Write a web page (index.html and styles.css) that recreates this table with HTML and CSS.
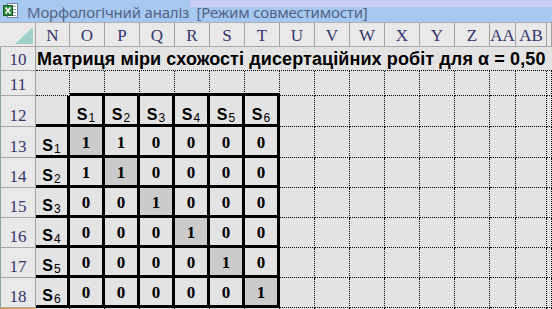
FILE: index.html
```html
<!DOCTYPE html>
<html>
<head>
<meta charset="utf-8">
<link rel="stylesheet" href="styles.css">
</head>
<body>
<div class="window">
  <div class="titlebar">
    <span class="lav"></span>
    <svg class="xlicon" width="15" height="15" viewBox="0 0 15 15">
      <rect x="4.5" y="0.5" width="10" height="14" fill="#fff" stroke="#6f82a6"/>
      <line x1="9" y1="3.5" x2="13" y2="3.5" stroke="#8aa0c0"/>
      <line x1="9" y1="6.5" x2="13" y2="6.5" stroke="#8aa0c0"/>
      <line x1="9" y1="9.5" x2="13" y2="9.5" stroke="#8aa0c0"/>
      <line x1="9" y1="12.5" x2="13" y2="12.5" stroke="#8aa0c0"/>
      <rect x="0.5" y="2.5" width="9" height="10" fill="#2a8a3e" stroke="#1b5e2a"/>
      <path d="M2.5 4.5 L7.5 10.5 M7.5 4.5 L2.5 10.5" stroke="#fff" stroke-width="1.6"/>
    </svg>
    <span class="title">Морфологічний аналіз&nbsp; [Режим совместимости]</span>
  </div>
  <div class="sheet">
    <!-- column headers -->
    <div class="hd corner"><svg width="35" height="24" viewBox="0 0 35 24"><polygon points="15,21 33,21 33,4" fill="#9fd1cd"/></svg></div>
    <div class="hd">N</div><div class="hd">O</div><div class="hd">P</div><div class="hd">Q</div><div class="hd">R</div><div class="hd">S</div><div class="hd">T</div>
    <div class="hd">U</div><div class="hd">V</div><div class="hd">W</div><div class="hd">X</div><div class="hd">Y</div><div class="hd">Z</div><div class="hd">AA</div><div class="hd">AB</div><div class="hd"></div>

    <!-- row 10 -->
    <div class="rh">10</div>
    <div class="c caption">Матриця міри схожості дисертаційних робіт для α = 0,50</div>

    <!-- row 11 -->
    <div class="rh">11</div>
    <div class="c"></div>
    <div class="c top"></div><div class="c top"></div><div class="c top"></div><div class="c top"></div><div class="c top"></div><div class="c top"></div>
    <div class="c"></div><div class="c"></div><div class="c"></div><div class="c"></div><div class="c"></div><div class="c"></div><div class="c"></div><div class="c"></div><div class="c"></div>

    <!-- row 12 -->
    <div class="rh">12</div>
    <div class="c t"></div>
    <div class="c t s">S<sub>1</sub></div><div class="c t s">S<sub>2</sub></div><div class="c t s">S<sub>3</sub></div><div class="c t s">S<sub>4</sub></div><div class="c t s">S<sub>5</sub></div><div class="c t s">S<sub>6</sub></div>
    <div class="c"></div><div class="c"></div><div class="c"></div><div class="c"></div><div class="c"></div><div class="c"></div><div class="c"></div><div class="c"></div><div class="c"></div>

    <!-- row 13 -->
    <div class="rh">13</div>
    <div class="c t s">S<sub>1</sub></div>
    <div class="c t n d">1</div><div class="c t n">1</div><div class="c t n">0</div><div class="c t n">0</div><div class="c t n">0</div><div class="c t n">0</div>
    <div class="c"></div><div class="c"></div><div class="c"></div><div class="c"></div><div class="c"></div><div class="c"></div><div class="c"></div><div class="c"></div><div class="c"></div>

    <!-- row 14 -->
    <div class="rh">14</div>
    <div class="c t s">S<sub>2</sub></div>
    <div class="c t n">1</div><div class="c t n d">1</div><div class="c t n">0</div><div class="c t n">0</div><div class="c t n">0</div><div class="c t n">0</div>
    <div class="c"></div><div class="c"></div><div class="c"></div><div class="c"></div><div class="c"></div><div class="c"></div><div class="c"></div><div class="c"></div><div class="c"></div>

    <!-- row 15 -->
    <div class="rh">15</div>
    <div class="c t s">S<sub>3</sub></div>
    <div class="c t n">0</div><div class="c t n">0</div><div class="c t n d">1</div><div class="c t n">0</div><div class="c t n">0</div><div class="c t n">0</div>
    <div class="c"></div><div class="c"></div><div class="c"></div><div class="c"></div><div class="c"></div><div class="c"></div><div class="c"></div><div class="c"></div><div class="c"></div>

    <!-- row 16 -->
    <div class="rh">16</div>
    <div class="c t s">S<sub>4</sub></div>
    <div class="c t n">0</div><div class="c t n">0</div><div class="c t n">0</div><div class="c t n d">1</div><div class="c t n">0</div><div class="c t n">0</div>
    <div class="c"></div><div class="c"></div><div class="c"></div><div class="c"></div><div class="c"></div><div class="c"></div><div class="c"></div><div class="c"></div><div class="c"></div>

    <!-- row 17 -->
    <div class="rh">17</div>
    <div class="c t s">S<sub>5</sub></div>
    <div class="c t n">0</div><div class="c t n">0</div><div class="c t n">0</div><div class="c t n">0</div><div class="c t n d">1</div><div class="c t n">0</div>
    <div class="c"></div><div class="c"></div><div class="c"></div><div class="c"></div><div class="c"></div><div class="c"></div><div class="c"></div><div class="c"></div><div class="c"></div>

    <!-- row 18 -->
    <div class="rh">18</div>
    <div class="c t s">S<sub>6</sub></div>
    <div class="c t n">0</div><div class="c t n">0</div><div class="c t n">0</div><div class="c t n">0</div><div class="c t n">0</div><div class="c t n d">1</div>
    <div class="c"></div><div class="c"></div><div class="c"></div><div class="c"></div><div class="c"></div><div class="c"></div><div class="c"></div><div class="c"></div><div class="c"></div>

    <!-- row 19 -->
    <div class="rh sel"></div>
    <div class="c"></div><div class="c"></div><div class="c"></div><div class="c"></div><div class="c"></div><div class="c"></div><div class="c"></div>
    <div class="c"></div><div class="c"></div><div class="c"></div><div class="c"></div><div class="c"></div><div class="c"></div><div class="c"></div><div class="c"></div><div class="c"></div>
  </div>
</div>
</body>
</html>
```

FILE: styles.css
```css
* { box-sizing: border-box; }
html, body { margin: 0; padding: 0; }
body { width: 552px; height: 309px; overflow: hidden; background: #e3e3e3; }

.window { width: 552px; height: 309px; overflow: hidden; }

.titlebar {
  position: relative;
  height: 22px;
  background: #a8c9ef;
  display: flex;
  align-items: center;
  padding-left: 3px;
}
.lav {
  position: absolute;
  left: 190px; right: 0; top: 0;
  height: 7px;
  background: #cacaf6;
}
.xlicon { position: relative; flex: none; margin-top: -2px; }
.title {
  position: relative;
  margin-left: 9px;
  margin-top: 2px;
  font-family: "Noto Sans", "Open Sans", sans-serif;
  font-size: 15px;
  letter-spacing: -0.2px;
  color: #506287;
  white-space: nowrap;
}

.sheet {
  display: grid;
  grid-template-columns: 36px 34px repeat(12, 35px) 26px 31px 1fr;
  grid-template-rows: 25px 24px 25px 31px 31px 30px 30px 30px 30px 30px 20px;
}

.hd, .rh {
  background: #e9e9e9;
  border-right: 1px solid #a2a2a2;
  border-bottom: 1px solid #a8a8a8;
  font-family: "Liberation Serif", "Times New Roman", serif;
  font-size: 17px;
  color: #34346e;
  display: flex;
  justify-content: center;
  align-items: flex-end;
  line-height: 19px;
  padding-bottom: 1px;
  overflow: hidden;
}
.hd { border-top: 1px solid #b0b0b0; }
.rh { border-left: 1px solid #7fa9a9; padding-bottom: 1px; }
.corner { align-items: stretch; padding: 0; }
.corner svg { display: block; }
.rh.sel { background: #f8d9a2; border-top: 2px solid #ee9a40; }

.c {
  background: #e3e3e3;
  border-right: 1px dotted #000;
  border-bottom: 1px dotted #000;
  display: flex;
  justify-content: center;
  align-items: flex-end;
  overflow: hidden;
}
.caption {
  grid-column: 2 / -1;
  justify-content: flex-start;
  border-right: none;
  padding-left: 1px;
  padding-bottom: 1px;
  font-family: "Liberation Sans", Arial, sans-serif;
  font-weight: bold;
  font-size: 18px;
  letter-spacing: 0.1px;
  line-height: 20px;
  color: #000;
  white-space: nowrap;
  overflow: visible;
}
.top { border-bottom: 3px solid #000; }
.t { border-right: 3px solid #000; border-bottom: 3px solid #000; }
.d { background: #cbcbcb; }

.s {
  font-family: "Liberation Sans", Arial, sans-serif;
  font-weight: bold;
  font-size: 16px;
  line-height: 18px;
  color: #000;
  padding-bottom: 0;
}
.s sub {
  font-weight: normal;
  font-size: 12px;
  line-height: 11px;
  vertical-align: -4px;
  margin-left: 1px;
}
.n {
  font-family: "Liberation Serif", "Times New Roman", serif;
  font-weight: bold;
  font-size: 17px;
  line-height: 19px;
  color: #000;
  padding-bottom: 3px;
}
```
